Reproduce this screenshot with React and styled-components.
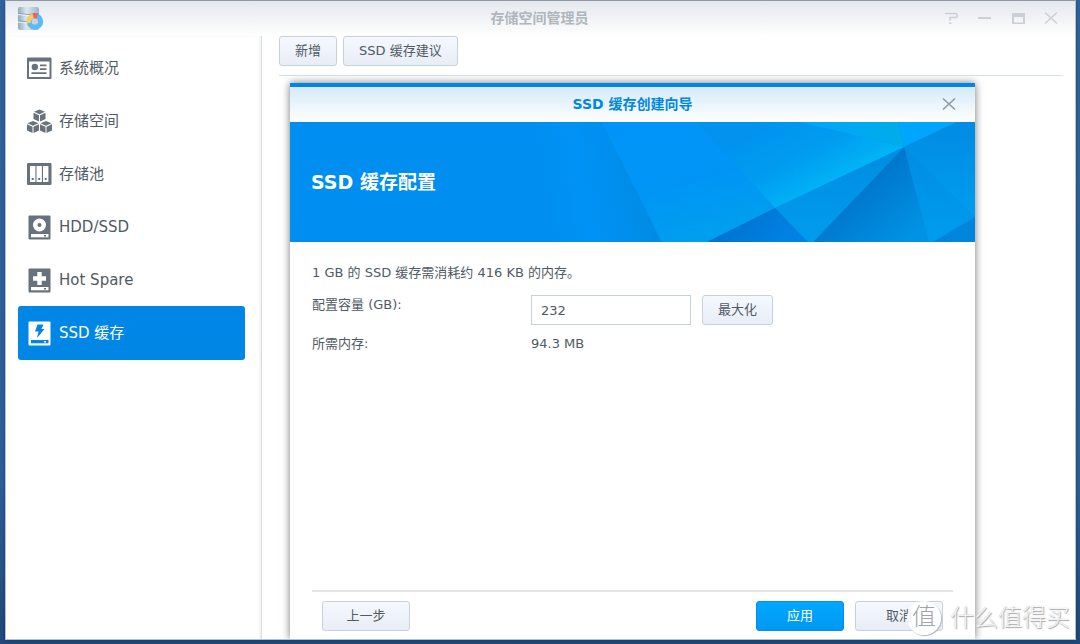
import React, {useState} from "react";
import styled, {createGlobalStyle} from "styled-components";

const GlobalStyle = createGlobalStyle`
    * { box-sizing: border-box; }
    body {
        margin: 0;
        font-family: "DejaVu Sans", "Noto Sans CJK SC", sans-serif;
        font-size: 13px;
        color: #505a64;
    }
    button, input { font: inherit; color: inherit; }
`
const Desktop = styled.div`
    display: flex;
    min-height: 100vh;
    padding: 0 4px 4px 5px;
    background: linear-gradient(#2f639f, #2c5f9b 75%, #21497c);
`
const Window = styled.main`
    position: relative;
    flex: 1;
    min-width: 0;
    display: flex;
    flex-direction: column;
    border: 1px solid #b4c0cd;
    border-top-color: #8e98a6;
    background: linear-gradient(#e4e8ee, #fff 36px);
    box-shadow: 0 0 4px rgba(0, 0, 0, 0.3);
`
const TitleBar = styled.header`
    display: grid;
    grid-template-columns: 120px 1fr 120px;
    align-items: center;
    height: 34px;
    padding: 0 14px 0 12px;
`
const WindowTitle = styled.h1`
    margin: 0;
    font-size: 14px;
    line-height: 20px;
    text-align: center;
    color: #afb6bd;
`
const WindowTools = styled.div`
    display: flex;
    justify-content: flex-end;
    gap: 14px;
`
const ToolButton = styled.button`
    display: flex;
    align-items: center;
    justify-content: center;
    width: 20px;
    height: 20px;
    padding: 0;
    border: 0;
    background: none;
    color: ${({$dark}) => ($dark ? "#8f99a3" : "#cbd0d5")};
`
const Content = styled.div`
    flex: 1;
    display: flex;
    padding-top: 1px;
`
const Sidebar = styled.nav`
    width: 256px;
    padding: 5px 16px 0 12px;
    border-right: 1px solid #dadde1;
    box-shadow: inset -2px 0 2px #f3f4f5;
`
const MenuItem = styled.button`
    display: flex;
    align-items: center;
    gap: 7px;
    width: 100%;
    height: 54px;
    padding: 0 9px;
    border: 0;
    border-radius: 3px;
    font-size: 15px;
    line-height: 20px;
    text-align: left;
    color: ${({$active}) => ($active ? "#fff" : "#505a64")};
    background: ${({$active}) => ($active ? "#0086e5" : "none")};
    & + & { margin-top: -1px; }
    svg { color: ${({$active}) => ($active ? "#fff" : "#68727c")}; }
    .hole { color: ${({$active}) => ($active ? "#0086e5" : "#fff")}; fill: currentColor; }
`
const Main = styled.section`
    flex: 1;
    min-width: 0;
    display: flex;
    flex-direction: column;
    padding: 0 12px 0 17px;
`
const Toolbar = styled.div`
    display: flex;
    gap: 6px;
    padding-bottom: 9px;
    border-bottom: 1px solid #d8e0e8;
`
const Button = styled.button`
    height: 30px;
    min-width: ${({$wide}) => ($wide ? "88px" : "0")};
    padding: 0 15px;
    border: 1px solid ${({$primary}) => ($primary ? "#0090e6" : "#c6d1dc")};
    border-radius: 3px;
    line-height: 20px;
    color: ${({$primary}) => ($primary ? "#fff" : "#505a64")};
    background: ${({$primary}) => ($primary ? "linear-gradient(#00a8ff, #0098f0)" : "linear-gradient(#f5f8ff, #e8edf6)")};
`
const Dialog = styled.section`
    flex: 1;
    display: flex;
    flex-direction: column;
    margin: 7px 88px 0 11px;
    border-top: 4px solid #0086e5;
    background: #fff;
    box-shadow: 0 0 8px rgba(0, 0, 0, 0.55);
    clip-path: inset(-12px -12px 0 -12px);
`
const DialogHeader = styled.header`
    display: grid;
    grid-template-columns: 20px 1fr 20px;
    align-items: center;
    height: 35px;
    padding: 0 16px 1px;
    background: linear-gradient(#d5eaf8, #fff);
`
const DialogTitle = styled.h2`
    margin: 0;
    font-size: 14px;
    line-height: 20px;
    text-align: center;
    color: #0086e5;
`
const Banner = styled.div`
    display: grid;
    height: 120px;
    background: #008ff0;
    & > * { grid-area: 1 / 1; }
`
const BannerTitle = styled.h3`
    align-self: center;
    margin: 0;
    padding: 0 21px;
    font-size: 19px;
    line-height: 24px;
    color: #fff;
`
const DialogBody = styled.form`
    flex: 1;
    padding: 21px 22px 0;
`
const Note = styled.p`
    margin: 0 0 12px;
    line-height: 20px;
`
const Field = styled.div`
    display: grid;
    grid-template-columns: 219px 160px auto;
    justify-content: start;
    line-height: 20px;
    margin-bottom: 9px;
`
const Label = styled.label`
    height: 20px;
`
const NumberInput = styled.input`
    width: 100%;
    height: 30px;
    padding: 0 9px;
    border: 1px solid #c6d1dc;
    background: #fff;
`
const FieldAction = styled.div`
    padding-left: 11px;
`
const DialogFooter = styled.footer`
    display: flex;
    gap: 11px;
    margin: 0 22px;
    padding: 9px 10px 8px;
    border-top: 2px solid #e4e4e4;
`
const Spacer = styled.span`
    flex: 1;
`
const Watermark = styled.div`
    position: absolute;
    right: 5px;
    bottom: 4px;
    display: flex;
    align-items: center;
    gap: 9px;
    font-size: 24px;
    font-weight: 300;
    line-height: 34px;
    color: #f4f4f4;
    text-shadow: 1px 1px 1px #a4a6a9, 0 0 1px #c4c6c8;
    pointer-events: none;
`
const WatermarkSeal = styled.span`
    width: 34px;
    height: 34px;
    border-radius: 50%;
    text-align: center;
    line-height: 32px;
    color: #a0a4a8;
    background: rgba(255, 255, 255, 0.9);
    box-shadow: 1px 1px 1px #b0b3b6;
    text-shadow: none;
`

const AppLogo = () => (
    <svg width="26" height="25" viewBox="0 0 26 25">
        <defs>
            <linearGradient id="disk">
                <stop offset="0" stopColor="#8fa9bc" />
                <stop offset=".4" stopColor="#dce8f0" />
                <stop offset="1" stopColor="#9db6c8" />
            </linearGradient>
        </defs>
        <rect x="0" y="1" width="21" height="23" rx="2" fill="url(#disk)" />
        <path d="M0 7.500q10.500 2 21 0M0 15q10.500 2 21 0" fill="none" stroke="#7f9bb0" />
        <path d="M0 8.500q10.500 2 21 0M0 16q10.500 2 21 0" fill="none" stroke="#eef4f8" />
        <circle cx="17" cy="15.500" r="5.700" fill="none" stroke="#5bb9f5" strokeWidth="5" />
        <path d="M8.500 17.500a8.700 8.700 0 0 1 6-10l1.500 4.800a3.500 3.500 0 0 0-2.700 4.200z" fill="#fbcb62" />
        <path d="M14.500 7.400a9 9 0 0 1 5.500 0l-1.500 5h-2.500z" fill="#f05d68" />
        <circle cx="17" cy="15.500" r="2.800" fill="#c3d5e2" />
    </svg>
)

const OverviewIcon = () => (
    <svg width="25" height="24" viewBox="0 0 25 24" fill="currentColor">
        <path fillRule="evenodd" d="M1 1.500h22.500a1 1 0 0 1 1 1v19.500a1 1 0 0 1-1 1H1a1 1 0 0 1-1-1V2.500a1 1 0 0 1 1-1zm1 4v15.500h20.500V5.500z" />
        <circle cx="7.800" cy="11" r="3.200" />
        <path d="M13 8.500h6.500v1.800H13zM13 12.200h6.500V14H13zM4.500 16.200h15V18h-15z" />
    </svg>
)

const Cube = ({x, y}) => (
    <g transform={`translate(${x} ${y})`}>
        <path d="M6 0l5.500 2.300L6 4.700.5 2.300z" />
        <path d="M0 3.200l5.500 2.500v6.300L0 9.500z" />
        <path d="M12 3.200L6.500 5.700v6.300L12 9.500z" />
    </g>
)

const VolumeIcon = () => (
    <svg width="25" height="26" viewBox="0 0 25 26" fill="currentColor">
        <Cube x={6.500} y={1.500} />
        <Cube x={0} y={13} />
        <Cube x={13} y={13} />
    </svg>
)

const PoolIcon = () => (
    <svg width="25" height="24" viewBox="0 0 25 24" fill="currentColor">
        <rect y="1" width="24.500" height="22" rx="1" />
        <path className="hole" d="M3 4h5.400v16H3zM9.500 4h5.400v16H9.500zM16 4h5.400v16H16z" />
        <path d="M4.700 16h2v2h-2zM11.200 16h2v2h-2zM17.700 16h2v2h-2z" />
    </svg>
)

const DriveIcon = ({children}) => (
    <svg width="25" height="25" viewBox="0 0 25 25" fill="currentColor">
        <rect x="1.500" y="0.500" width="22" height="24" rx="1" />
        <g className="hole">
            {children}
            <path d="M4 19h17.500v3.300H4z" />
        </g>
        <rect x="17" y="20" width="2" height="1.500" />
    </svg>
)

const CloseIcon = () => (
    <svg width="14" height="14" viewBox="0 0 14 14" fill="none" stroke="currentColor" strokeWidth="1.600">
        <path d="M1 1.500l12 11M13 1.500l-12 11" />
    </svg>
)

const BannerArt = () => (
    <svg width="100%" height="120" viewBox="0 0 685 120" preserveAspectRatio="xMaxYMid slice">
        <defs>
            <linearGradient id="g1" gradientUnits="userSpaceOnUse" x1="240" y1="60" x2="342" y2="60" gradientTransform="skewX(10)">
                <stop offset="0" stopColor="#008ff0" />
                <stop offset=".4" stopColor="#0092f6" />
                <stop offset="1" stopColor="#008ce6" />
            </linearGradient>
            <linearGradient id="g2" x1="0" y1="0" x2=".4" y2="1">
                <stop offset="0" stopColor="#0094fa" />
                <stop offset=".6" stopColor="#0095f5" />
                <stop offset="1" stopColor="#009eef" />
            </linearGradient>
            <linearGradient id="g3" gradientUnits="userSpaceOnUse" x1="490" y1="0" x2="530" y2="75">
                <stop offset="0" stopColor="#0094ef" />
                <stop offset=".5" stopColor="#009df0" />
                <stop offset="1" stopColor="#00b8f8" />
            </linearGradient>
            <linearGradient id="g4" x1="0" y1="0" x2="1" y2="0">
                <stop offset="0" stopColor="#00a5fb" />
                <stop offset="1" stopColor="#00ace9" />
            </linearGradient>
            <linearGradient id="g5" x1="0" y1="0" x2="0" y2="1">
                <stop offset="0" stopColor="#008ce2" />
                <stop offset="1" stopColor="#009cee" />
            </linearGradient>
            <linearGradient id="g6" gradientUnits="userSpaceOnUse" x1="560" y1="65" x2="610" y2="125">
                <stop offset="0" stopColor="#0074cb" />
                <stop offset="1" stopColor="#0092e4" />
            </linearGradient>
            <linearGradient id="g7" x1="0" y1="0" x2="1" y2=".3">
                <stop offset="0" stopColor="#006cc9" />
                <stop offset="1" stopColor="#0082e4" />
            </linearGradient>
        </defs>
        <path d="M240 0H312L372 120H240z" fill="url(#g1)" />
        <path d="M312 0H406L485 86L417 120H372z" fill="url(#g2)" />
        <path d="M406 0H510L614 25L485 86z" fill="url(#g3)" />
        <path d="M510 0H608L614 25z" fill="url(#g4)" />
        <path d="M608 0H667L614 25z" fill="#00a6fc" />
        <path d="M667 0H685V95L614 25z" fill="url(#g5)" />
        <path d="M614 25L685 95L643 120H639z" fill="url(#g5)" />
        <path d="M685 95V120H643z" fill="#0084dc" />
        <path d="M614 25L639 120H523z" fill="url(#g6)" />
        <path d="M614 25L523 120H518L485 86z" fill="url(#g5)" />
        <path d="M485 86L518 120H417z" fill="url(#g7)" />
    </svg>
)

const menu = [
    {name: "系统概况", icon: <OverviewIcon />},
    {name: "存储空间", icon: <VolumeIcon />},
    {name: "存储池", icon: <PoolIcon />},
    {name: "HDD/SSD", icon: (
        <DriveIcon>
            <path fillRule="evenodd" d="M12.500 3.500a6.500 6.500 0 1 1 0 13 6.500 6.500 0 0 1 0-13zm0 4.500a2 2 0 1 0 0 4 2 2 0 0 0 0-4z" />
        </DriveIcon>
    )},
    {name: "Hot Spare", icon: (
        <DriveIcon>
            <path d="M10.300 4h4.400v4.300H19v4.400h-4.300V17h-4.400v-4.300H6V8.300h4.300z" />
        </DriveIcon>
    )},
    {name: "SSD 缓存", icon: (
        <DriveIcon>
            <path d="M10.500 3.500h6l-2 4.500h3L10 17l1.500-6.500H8z" />
        </DriveIcon>
    )},
]

const App = () =>{
    const [active, setActive] = useState("SSD 缓存");
    const [size, setSize] = useState("232");

    return(
        <Desktop>
            <GlobalStyle />
            <Window>
                <TitleBar>
                    <AppLogo />
                    <WindowTitle>存储空间管理员</WindowTitle>
                    <WindowTools>
                        <ToolButton aria-label="帮助">
                            <svg width="14" height="14" viewBox="0 0 14 14" fill="none" stroke="currentColor" strokeWidth="1.600">
                                <path d="M1 2.500h11q1 0 1 1v2q0 1-1 1H6v3M5 12.200h2.500" />
                            </svg>
                        </ToolButton>
                        <ToolButton aria-label="最小化">
                            <svg width="14" height="14" viewBox="0 0 14 14"><path d="M1 6h13v2H1z" fill="currentColor" /></svg>
                        </ToolButton>
                        <ToolButton aria-label="最大化窗口">
                            <svg width="14" height="14" viewBox="0 0 14 14">
                                <path fillRule="evenodd" d="M1 2h13v11H1zm2 4v5.500h9V6z" fill="currentColor" />
                            </svg>
                        </ToolButton>
                        <ToolButton aria-label="关闭"><CloseIcon /></ToolButton>
                    </WindowTools>
                </TitleBar>
                <Content>
                    <Sidebar>
                        {menu.map((item) => (
                            <MenuItem key={item.name} $active={item.name === active} onClick={() => setActive(item.name)}>
                                {item.icon}
                                {item.name}
                            </MenuItem>
                        ))}
                    </Sidebar>
                    <Main>
                        <Toolbar>
                            <Button>新增</Button>
                            <Button>SSD 缓存建议</Button>
                        </Toolbar>
                        <Dialog role="dialog" aria-labelledby="wizard-title">
                            <DialogHeader>
                                <span />
                                <DialogTitle id="wizard-title">SSD 缓存创建向导</DialogTitle>
                                <ToolButton $dark aria-label="关闭向导"><CloseIcon /></ToolButton>
                            </DialogHeader>
                            <Banner>
                                <BannerArt />
                                <BannerTitle>SSD 缓存配置</BannerTitle>
                            </Banner>
                            <DialogBody onSubmit={(e) => e.preventDefault()}>
                                <Note>1 GB 的 SSD 缓存需消耗约 416 KB 的内存。</Note>
                                <Field>
                                    <Label htmlFor="size">配置容量 (GB):</Label>
                                    <NumberInput id="size" value={size} onChange={(e) => setSize(e.target.value)} />
                                    <FieldAction>
                                        <Button type="button" onClick={() => setSize("232")}>最大化</Button>
                                    </FieldAction>
                                </Field>
                                <Field>
                                    <span>所需内存:</span>
                                    <span>94.3 MB</span>
                                </Field>
                            </DialogBody>
                            <DialogFooter>
                                <Button $wide>上一步</Button>
                                <Spacer />
                                <Button $wide $primary>应用</Button>
                                <Button $wide>取消</Button>
                            </DialogFooter>
                        </Dialog>
                    </Main>
                </Content>
                <Watermark>
                    <WatermarkSeal>值</WatermarkSeal>
                    <span>什么值得买</span>
                </Watermark>
            </Window>
        </Desktop>
    )
}

export default App;
